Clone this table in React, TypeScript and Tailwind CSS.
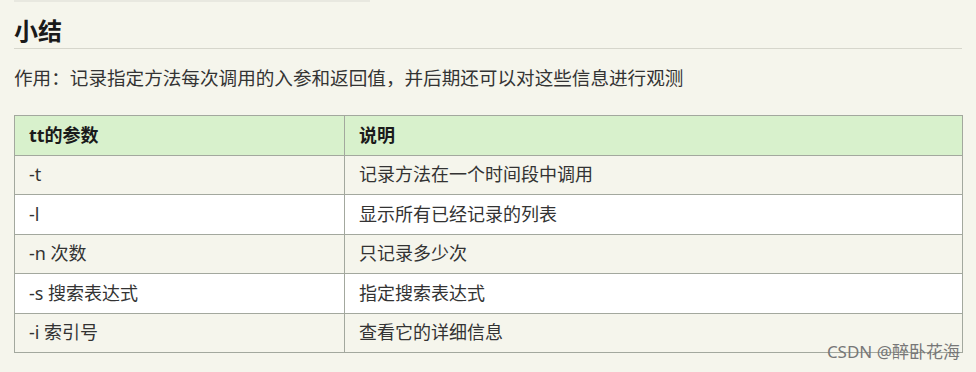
const rows = [
  { param: "-t", desc: "记录方法在一个时间段中调用" },
  { param: "-l", desc: "显示所有已经记录的列表" },
  { param: "-n 次数", desc: "只记录多少次" },
  { param: "-s 搜索表达式", desc: "指定搜索表达式" },
  { param: "-i 索引号", desc: "查看它的详细信息" },
];

export default function App() {
  return (
    <div
      className="relative h-[372px] w-[976px] overflow-hidden bg-[#f5f5ec] text-[#222]"
      style={{ fontFamily: '"Noto Sans", "Noto Sans CJK SC", sans-serif' }}
    >
      <div className="mx-[14px] h-[2px] w-[356px] bg-[#e8e8e0]" />
      <div className="px-[14px]">
        {/* Heading */}
        <h2 className="mt-[14px] border-b border-[#d6d6cc] pb-[2px] text-[24px] font-bold leading-[30px] text-[#1a1a1a]">
          小结
        </h2>
        <p className="mt-[15px] text-[18.6px] leading-[28px] text-[#333]">
          作用：记录指定方法每次调用的入参和返回值，并后期还可以对这些信息进行观测
        </p>

        {/* Table */}
        <table className="mt-[23px] w-[949px] border-collapse text-[18px] text-[#333]">
          <thead>
            <tr className="h-[39.5px] bg-[#d8f1cc]">
              <th className="w-[330px] border border-[#a3a89e] pl-[14px] text-left font-bold text-[#1a1a1a]">
                tt的参数
              </th>
              <th className="border border-[#a3a89e] pl-[14px] text-left font-bold text-[#1a1a1a]">
                说明
              </th>
            </tr>
          </thead>
          <tbody>
            {rows.map((row, i) => (
              <tr
                key={row.param}
                className={i % 2 === 0 ? "h-[39.5px] bg-[#f5f5ec]" : "h-[39.5px] bg-white"}
              >
                <td className="border border-[#a3a89e] pl-[14px]">{row.param}</td>
                <td className="border border-[#a3a89e] pl-[14px]">{row.desc}</td>
              </tr>
            ))}
          </tbody>
        </table>
      </div>

      {/* watermark */}
      <div className="absolute right-[16px] top-[339px] text-[17px] leading-[26px] text-[#777]">
        CSDN @醉卧花海
      </div>
    </div>
  );
}
